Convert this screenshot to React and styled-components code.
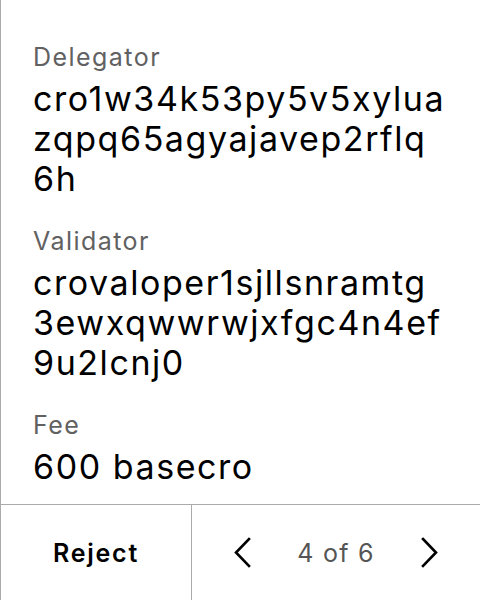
import styled, { createGlobalStyle } from "styled-components"

const GlobalStyle = createGlobalStyle`
  html, body {
    margin: 0;
    padding: 0;
    background: #fff;
  }
  body {
    font-family: Inter, "Liberation Sans", sans-serif;
    color: #000;
  }
`

const fields = [
  { label: "Delegator", value: "cro1w34k53py5v5xyluazqpq65agyajavep2rflq6h" },
  { label: "Validator", value: "crovaloper1sjllsnramtg3ewxqwwrwjxfgc4n4ef9u2lcnj0" },
  { label: "Fee", value: "600 basecro" },
]

function Chevron({ dir }) {
  const points = dir === "left" ? "15,2 2,15.5 15,29" : "2,2 15,15.5 2,29"
  return (
    <svg width="17" height="31" viewBox="0 0 17 31" fill="none">
      <polyline points={points} stroke="#000" strokeWidth="2.6" strokeLinecap="square" />
    </svg>
  )
}

export default function App() {
  return (
    <>
      <GlobalStyle />
      <Page>
        <Content>
          {fields.map((f) => (
            <Field key={f.label}>
              <Label>{f.label}</Label>
              <Value>{f.value}</Value>
            </Field>
          ))}
        </Content>
        <Footer>
          <RejectButton>Reject</RejectButton>
          <Pager>
            <NavButton>
              <Chevron dir="left" />
            </NavButton>
            <PageText>4 of 6</PageText>
            <NavButton>
              <Chevron dir="right" />
            </NavButton>
          </Pager>
        </Footer>
      </Page>
    </>
  )
}

const Page = styled.div`
  height: 600px;
  display: flex;
  flex-direction: column;
  border-left: 1px solid #ababab;
  box-sizing: border-box;
`

const Content = styled.div`
  flex: 1;
  padding: 41px 32px 0 32px;
  display: flex;
  flex-direction: column;
  gap: 26px;
  overflow: hidden;
`

const Field = styled.div`
  display: flex;
  flex-direction: column;
  gap: 6px;
`

const Label = styled.div`
  font-size: 25px;
  line-height: 32px;
  letter-spacing: 0.058em;
  color: #616161;
`

const Value = styled.div`
  font-size: 34px;
  line-height: 40px;
  letter-spacing: 0.046em;
  color: #000;
  word-break: break-all;
`

const Footer = styled.div`
  height: 96px;
  flex-shrink: 0;
  display: flex;
  border-top: 1px solid #ababab;
  box-sizing: border-box;
`

const RejectButton = styled.button`
  width: 191px;
  border: none;
  border-right: 1px solid #ababab;
  background: none;
  font-family: Inter, "Liberation Sans", sans-serif;
  font-size: 25px;
  font-weight: 600;
  letter-spacing: 0.07em;
  color: #000;
  padding: 0;
`

const Pager = styled.div`
  flex: 1;
  display: flex;
  align-items: center;
  justify-content: center;
  gap: 46px;
`

const NavButton = styled.button`
  border: none;
  background: none;
  padding: 0;
  display: flex;
`

const PageText = styled.span`
  font-size: 25px;
  letter-spacing: 0.05em;
  color: #555;
`
